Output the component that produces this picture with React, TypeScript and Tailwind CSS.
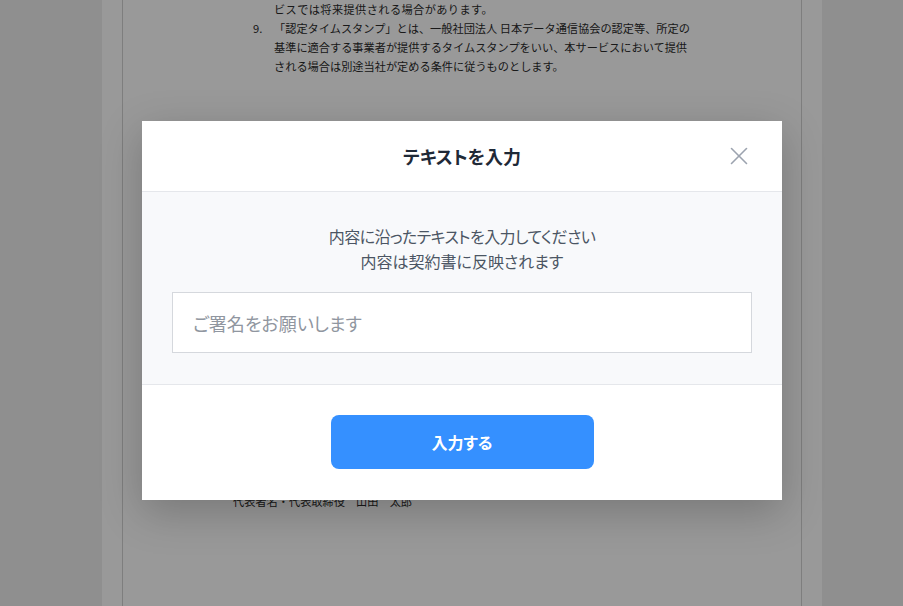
import { useState } from 'react'

const jp = "font-['Noto_Sans_CJK_JP',sans-serif] [font-feature-settings:'palt']"

function ContractPage() {
  return (
    <div className="ml-[102px] h-full w-[720px] bg-white px-5">
      <div className="h-full whitespace-nowrap border-x border-[#d2d2d2] font-['Noto_Sans_CJK_JP',serif] text-[11.2px] leading-[19px] text-[#2a2a2a]">
        <div className="pl-[151px]">
          <p className="tracking-[0.4px]">ビスでは将来提供される場合があります。</p>
          <div className="-ml-[21px] flex">
            <span className="w-[21px]">9.</span>
            <p>
              「認定タイムスタンプ」とは、一般社団法人 日本データ通信協会の認定等、所定の
              <br />
              基準に適合する事業者が提供するタイムスタンプをいい、本サービスにおいて提供
              <br />
              される場合は別途当社が定める条件に従うものとします。
            </p>
          </div>
        </div>
        <p className="mt-[416px] pl-[110px]">代表者名・代表取締役　山田　太郎</p>
      </div>
    </div>
  )
}

function CloseIcon() {
  return (
    <svg width="18" height="18" viewBox="0 0 18 18" fill="none" stroke="#9ca3af" strokeWidth="1.6" strokeLinecap="round">
      <line x1="1.5" y1="1.5" x2="16.5" y2="16.5" />
      <line x1="16.5" y1="1.5" x2="1.5" y2="16.5" />
    </svg>
  )
}

function TextInputModal() {
  const [value, setValue] = useState('')

  return (
    <div className={`w-[640px] bg-white shadow-[0_12px_40px_rgba(0,0,0,0.22)] ${jp}`}>
      <div className="relative flex h-[71px] items-center justify-center border-b border-[#e5e7eb]">
        <h2 className="text-[18px] font-bold text-[#1f2937]">テキストを入力</h2>
        <button type="button" className="absolute right-[34px] top-[26px]">
          <CloseIcon />
        </button>
      </div>
      <div className="bg-[#f8f9fb] px-[30px] pb-[31px] pt-[32px]">
        <p className="text-center text-[16px] leading-[25px] text-[#4b5563]">
          <span className="tracking-[-0.6px]">内容に沿ったテキストを入力してください</span>
          <br />
          内容は契約書に反映されます
        </p>
        <input
          value={value}
          onChange={e => { setValue(e.target.value) }}
          placeholder="ご署名をお願いします"
          className="mt-[18px] h-[61px] w-full border border-[#d5d8dd] bg-white px-5 text-[18px] text-[#1f2937] outline-none placeholder:text-[#9096a0]"
        />
      </div>
      <div className="flex justify-center border-t border-[#e5e7eb] pb-[31px] pt-[30px]">
        <button type="button" className="h-[54px] w-[263px] rounded-lg bg-[#3590ff] text-[16px] font-bold text-white">
          入力する
        </button>
      </div>
    </div>
  )
}

export default function App() {
  return (
    <div className="relative h-[606px] w-[903px] overflow-hidden bg-[#eeeeee]">
      <ContractPage />
      <div className="absolute inset-0 bg-black/40" />
      <div className="absolute left-[142px] top-[121px]">
        <TextInputModal />
      </div>
    </div>
  )
}
